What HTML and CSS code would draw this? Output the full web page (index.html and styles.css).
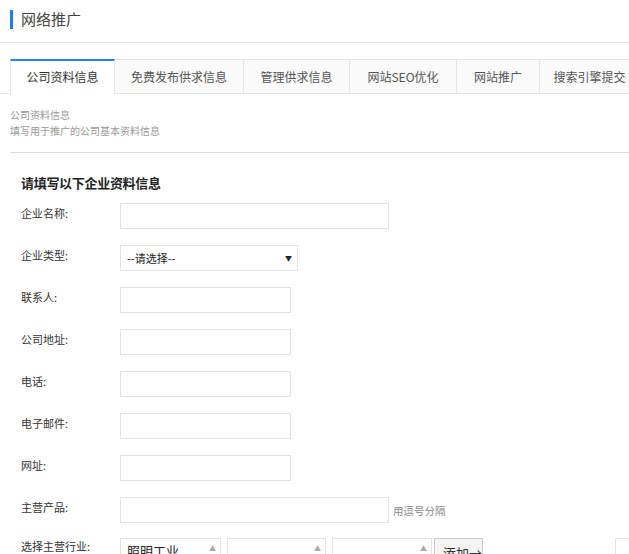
FILE: index.html
```html
<!DOCTYPE html>
<html lang="zh-CN">
<head>
<meta charset="utf-8">
<title>网络推广</title>
<link rel="stylesheet" href="styles.css">
</head>
<body>
<div class="page">
  <div class="header"><span class="bar"></span><h1>网络推广</h1></div>
  <ul class="tabs">
    <li class="tab active">公司资料信息</li>
    <li class="tab t2">免费发布供求信息</li>
    <li class="tab t3">管理供求信息</li>
    <li class="tab t4">网站SEO优化</li>
    <li class="tab t5">网站推广</li>
    <li class="tab t6">搜索引擎提交</li>
  </ul>
  <div class="intro">
    <p>公司资料信息</p>
    <p>填写用于推广的公司基本资料信息</p>
  </div>
  <div class="form">
    <h2>请填写以下企业资料信息</h2>
    <div class="row"><label>企业名称:</label><span class="input wide"></span></div>
    <div class="row"><label>企业类型:</label><span class="select">--请选择--<i>&#9660;</i></span></div>
    <div class="row"><label>联系人:</label><span class="input"></span></div>
    <div class="row"><label>公司地址:</label><span class="input"></span></div>
    <div class="row"><label>电话:</label><span class="input"></span></div>
    <div class="row"><label>电子邮件:</label><span class="input"></span></div>
    <div class="row"><label>网址:</label><span class="input"></span></div>
    <div class="row"><label>主营产品:</label><span class="input wide"></span><span class="hint">用逗号分隔</span></div>
    <div class="row last"><label>选择主营行业:</label>
      <span class="list l1"><span class="opt">照明工业</span><i>&#9650;</i></span>
      <span class="list l2"><i>&#9650;</i></span>
      <span class="list l3"><i>&#9650;</i></span>
      <span class="btn">添加→</span>
      <span class="list l4"></span>
    </div>
  </div>
</div>
</body>
</html>
```
FILE: styles.css
```css
* { box-sizing: border-box; }
html, body { margin: 0; padding: 0; background: #fff; overflow: hidden; }
body { font-family: "Noto Sans CJK SC", "Liberation Sans", sans-serif; color: #333; font-size: 12px; width: 629px; height: 554px; }
.page { width: 640px; height: 554px; overflow: hidden; }
.header { height: 43px; border-bottom: 1px solid #e6e6e6; display: flex; align-items: flex-start; padding: 9px 0 0 10px; }
.header .bar { width: 3px; height: 19px; background: #1e7cf2; margin-top: 1px; }
.header h1 { margin: 0 0 0 8px; font-size: 15px; font-weight: normal; line-height: 20px; color: #444; }
.tabs { list-style: none; margin: 16px 0 0 0; padding: 0 0 0 10px; display: flex; border-bottom: 1px solid #e6e6e6; height: 35px; }
.tab { height: 34px; line-height: 33px; text-align: center; font-size: 12px; color: #555; background: #fafafa; border: 1px solid #e6e6e6; border-left: none; border-bottom: none; flex: none; }
.tab.active { width: 105px; background: #fff; border-top: 2px solid #1e88e5; border-left: 1px solid #e6e6e6; height: 35px; line-height: 32px; color: #333; }
.t2 { width: 129px; }
.t3 { width: 106px; }
.t4 { width: 107px; }
.t5 { width: 83px; }
.t6 { width: 100px; }
.intro { margin: 0 0 0 10px; padding: 13px 0 13px 0; border-bottom: 1px solid #ddd; color: #999; font-size: 10px; }
.intro p { margin: 0; line-height: 16px; }
.form { padding: 22px 0 0 21px; }
.form h2 { margin: 0 0 12px; font-size: 13px; font-weight: bold; color: #222; line-height: 16px; letter-spacing: -0.3px; }
.row { display: flex; align-items: center; height: 26px; margin-bottom: 16px; }
.row label { width: 99px; flex: none; color: #333; font-size: 11px; position: relative; top: -3px; }
.input { display: block; width: 171px; height: 26px; border: 1px solid #e3e3e3; background: #fff; }
.input.wide { width: 269px; }
.select { display: flex; align-items: center; justify-content: space-between; width: 178px; height: 26px; border: 1px solid #e3e3e3; padding: 0 5px 0 6px; font-size: 11px; color: #222; }
.select i { font-style: normal; font-size: 7px; color: #222; }
.hint { margin-left: 4px; color: #888; font-size: 10.5px; }
.last { align-items: flex-start; height: 30px; margin-top: -1px; }
.last label { top: 0; line-height: 16px; }
.list { display: flex; align-items: flex-start; height: 30px; border: 1px solid #e3e3e3; border-bottom: none; width: 101px; padding: 3px 4px 0 6px; font-size: 13px; color: #222; margin-right: 6px; flex: none; }
.list i { font-style: normal; font-size: 7px; color: #aaa; margin-top: 1px; margin-left: auto; }
.l2 { width: 99px; }
.l3 { width: 100px; margin-right: 2px; }
.opt { line-height: 18px; }
.btn { display: block; width: 49px; height: 30px; border: 1px solid #ccc; border-bottom: none; background: #f4f4f4; padding: 4px 0 0 8px; font-size: 13px; color: #333; flex: none; }
.l4 { width: 20px; margin-left: 132px; }
```
